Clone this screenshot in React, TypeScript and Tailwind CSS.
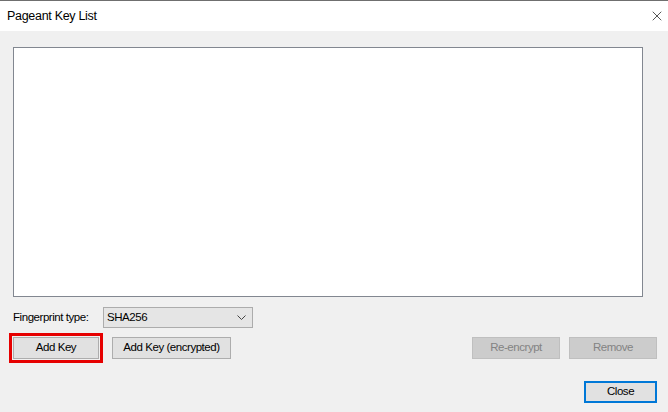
import { X } from "lucide-react";

function WinButton({
  label,
  width,
  disabled,
  primary,
}: {
  label: string;
  width: string;
  disabled?: boolean;
  primary?: boolean;
}) {
  const base =
    "flex h-[22px] items-center justify-center text-[11.5px] tracking-[-0.45px] leading-none";
  if (disabled)
    return (
      <div className={`${base} ${width} border border-[#bfbfbf] bg-[#cccccc] text-[#838383]`}>
        {label}
      </div>
    );
  if (primary)
    return (
      <div className={`${base} ${width} border-2 border-[#0078d7] bg-[#e1e1e1] text-black`}>
        {label}
      </div>
    );
  return (
    <div className={`${base} ${width} border border-[#adadad] bg-[#e1e1e1] text-black`}>
      {label}
    </div>
  );
}

export default function App() {
  return (
    <div
      className="flex h-[412px] w-[668px] flex-col overflow-hidden border-t border-[#6f6f6f] bg-[#f0f0f0]"
      style={{ fontFamily: '"Liberation Sans", Arial, sans-serif' }}
    >
      <div className="flex h-[30px] shrink-0 items-center justify-between bg-white pl-[7px] pr-[3px]">
        <span className="text-[12.5px] tracking-[-0.3px] text-black">Pageant Key List</span>
        <X className="h-[16px] w-[16px] text-black" strokeWidth={1} />
      </div>

      <div className="flex flex-col px-[13px] pt-[16px]">
        <div className="h-[250px] w-[630px] border border-[#828790] bg-white" />

        <div className="mt-[10px] flex items-center">
          <span className="w-[90px] text-[11.5px] tracking-[-0.45px] text-black">
            Fingerprint type:
          </span>
          <div className="flex h-[21px] w-[150px] items-center justify-between border border-[#acacac] bg-[#e5e5e5] pl-[3px] pr-[6px]">
            <span className="text-[11.5px] tracking-[-0.45px] text-black">SHA256</span>
            <svg width="9" height="5" viewBox="0 0 9 5" className="text-[#444]">
              <path d="M0.5 0.5 L4.5 4.5 L8.5 0.5" fill="none" stroke="currentColor" strokeWidth="1" />
            </svg>
          </div>
        </div>

        <div className="-ml-[4px] mt-[5px] flex items-center">
          <div className="border-[3px] border-[#e60000] p-[1px]">
            <WinButton label="Add Key" width="w-[86px]" />
          </div>
          <div className="ml-[9px]">
            <WinButton label="Add Key (encrypted)" width="w-[119px]" />
          </div>
          <div className="ml-auto mr-[-2px] flex gap-[9px]">
            <WinButton label="Re-encrypt" width="w-[88px]" disabled />
            <WinButton label="Remove" width="w-[88px]" disabled />
          </div>
        </div>

        <div className="mr-[-2px] mt-[18px] flex justify-end">
          <WinButton label="Close" width="w-[73px]" primary />
        </div>
      </div>
    </div>
  );
}
